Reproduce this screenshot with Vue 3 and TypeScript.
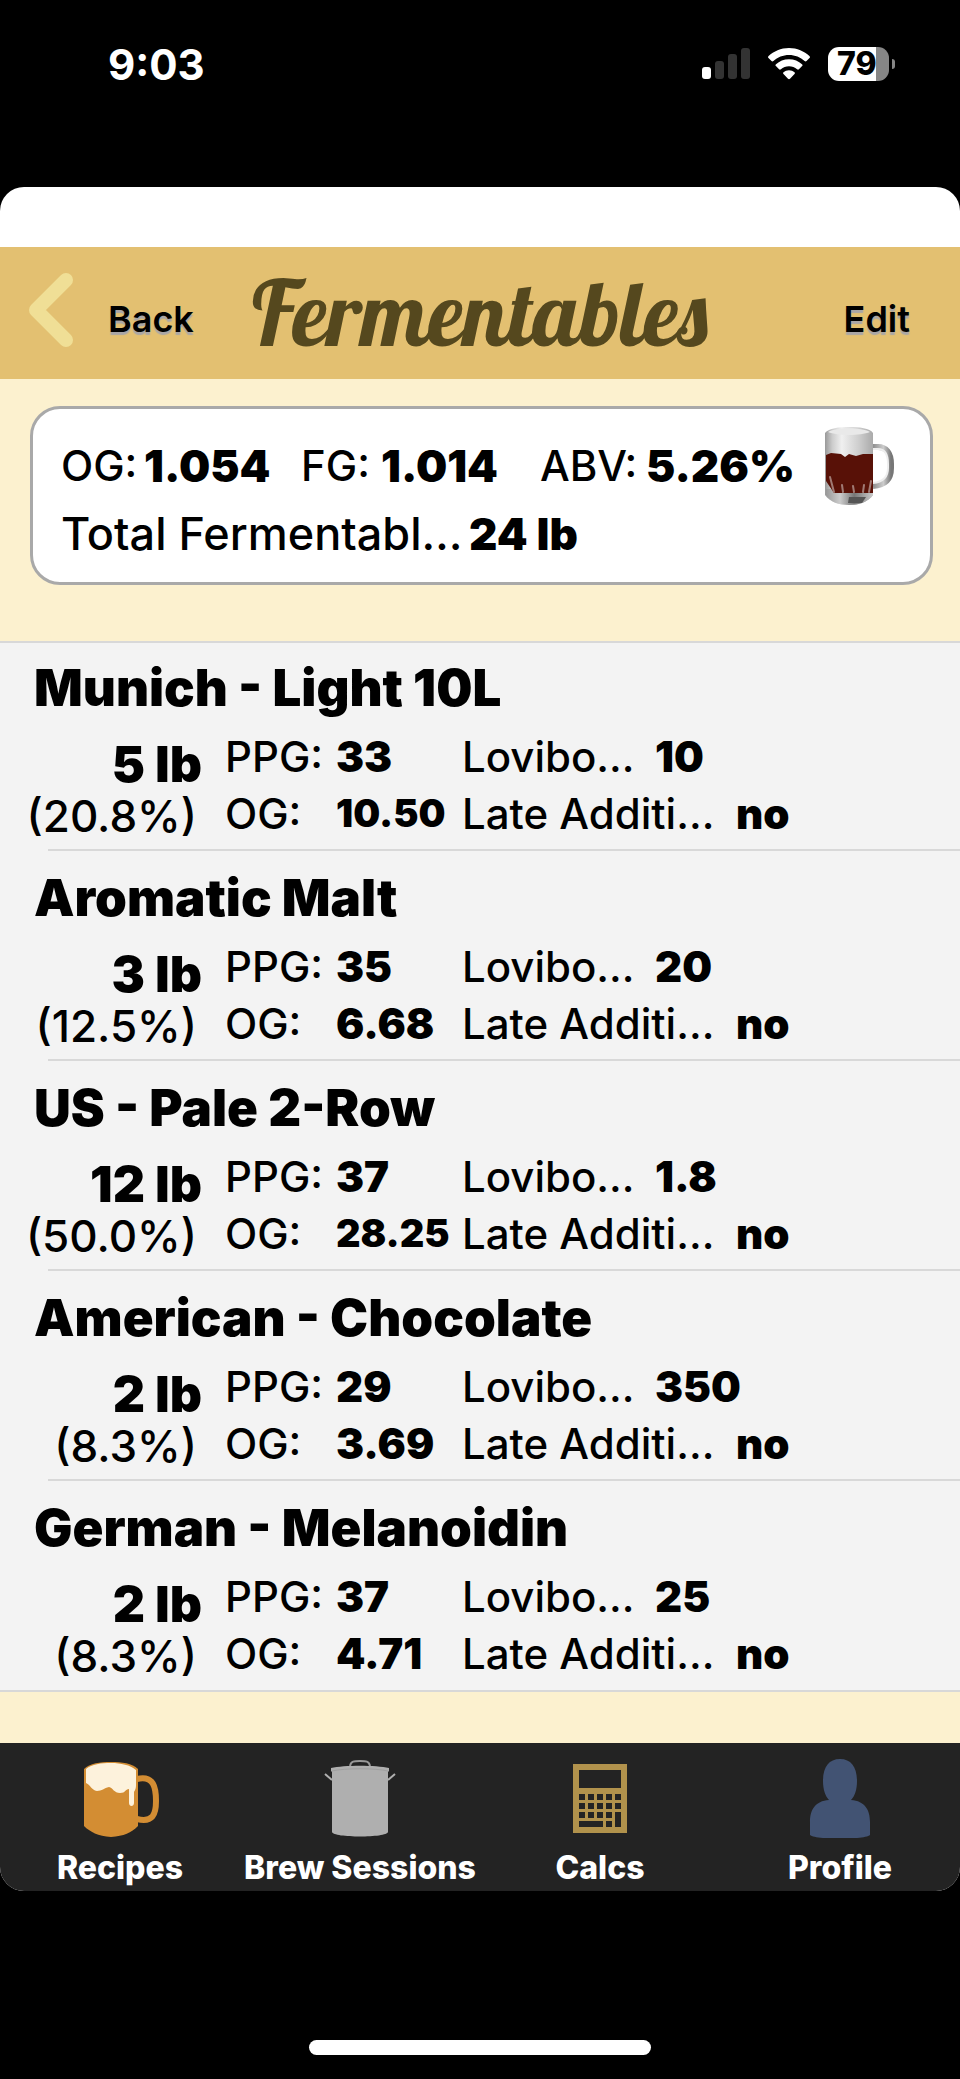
<script setup lang="ts">
interface Fermentable {
  name: string
  amount: string
  share: string
  ppg: string
  og: string
  lovibond: string
  late: string
}

const fermentables: Fermentable[] = [
  { name: 'Munich - Light 10L', amount: '5 lb', share: '(20.8%)', ppg: '33', og: '10.50', lovibond: '10', late: 'no' },
  { name: 'Aromatic Malt', amount: '3 lb', share: '(12.5%)', ppg: '35', og: '6.68', lovibond: '20', late: 'no' },
  { name: 'US - Pale 2-Row', amount: '12 lb', share: '(50.0%)', ppg: '37', og: '28.25', lovibond: '1.8', late: 'no' },
  { name: 'American - Chocolate', amount: '2 lb', share: '(8.3%)', ppg: '29', og: '3.69', lovibond: '350', late: 'no' },
  { name: 'German - Melanoidin', amount: '2 lb', share: '(8.3%)', ppg: '37', og: '4.71', lovibond: '25', late: 'no' },
]

const keyColumns = [6, 15, 24, 33, 42]
</script>

<template>
  <div class="screen">
    <div class="status">
      <span class="time">9:03</span>
      <div class="indicators">
        <svg viewBox="0 0 48 32" width="48" height="32">
          <rect x="0" y="19" width="9" height="12" rx="3" fill="#fff" />
          <rect x="13" y="13" width="9" height="18" rx="3" fill="#333" />
          <rect x="26" y="6" width="9" height="25" rx="3" fill="#333" />
          <rect x="39" y="0" width="9" height="31" rx="3" fill="#333" />
        </svg>
        <svg viewBox="0 0 42 32" width="42" height="32" fill="#fff">
          <path d="M21 0C12.900 0 5.700 3.200 .6 8.100c-.7.7-.7 1.400-.1 2l3 3c.6.6 1.300.5 1.900 0C9.500 9.300 15 7 21 7s11.500 2.300 15.600 6.100c.6.5 1.300.6 1.900 0l3-3c.6-.6.6-1.300-.1-2C36.300 3.200 29.100 0 21 0z" />
          <path d="M21 11.200c-5.100 0-9.600 1.900-13 5-.7.6-.7 1.300-.1 1.900l3.200 3.200c.6.6 1.200.5 1.800 0C15.100 19.400 17.900 18.300 21 18.300s5.900 1.100 8.100 3c.6.5 1.200.6 1.800 0l3.200-3.200c.6-.6.6-1.300-.1-1.900-3.400-3.100-7.900-5-13-5z" />
          <path d="M21 22.200c-2.100 0-4 .8-5.500 2-.6.5-.6 1.200 0 1.800l4.500 4.700c.6.6 1.400.6 2 0l4.500-4.700c.6-.6.6-1.300 0-1.800-1.500-1.200-3.400-2-5.500-2z" />
        </svg>
        <div class="battery"><span class="charge">79</span><i class="nub"></i></div>
      </div>
    </div>

    <main class="sheet">
      <header class="header">
        <button class="nav back" type="button">
          <svg viewBox="0 0 44 80" width="44" height="80" fill="none" stroke="#f0df96" stroke-width="14" stroke-linecap="round" stroke-linejoin="round">
            <path d="M37 7 7 37l30 30" />
          </svg>
          <span>Back</span>
        </button>
        <h1 class="heading">Fermentables</h1>
        <button class="nav" type="button"><span>Edit</span></button>
      </header>

      <section class="summary">
        <div class="card">
          <div class="stats">
            <dl class="line">
              <dt>OG:</dt><dd>1.054</dd>
              <dt>FG:</dt><dd>1.014</dd>
              <dt>ABV:</dt><dd>5.26%</dd>
            </dl>
            <svg viewBox="0 0 70 78" width="70" height="78">
              <defs>
                <linearGradient id="foam" x1="0" x2="1" y1="0" y2="0">
                  <stop offset="0" stop-color="#999" /><stop offset=".15" stop-color="#ccc" /><stop offset=".35" stop-color="#f0f0f0" /><stop offset=".7" stop-color="#cecece" /><stop offset="1" stop-color="#aaa" />
                </linearGradient>
                <linearGradient id="base" x1="0" x2="1" y1="0" y2="0">
                  <stop offset="0" stop-color="#999" /><stop offset=".3" stop-color="#ccc" /><stop offset=".6" stop-color="#777" /><stop offset="1" stop-color="#ccc" />
                </linearGradient>
                <linearGradient id="handle" x1="0" x2="1" y1="0" y2="0">
                  <stop offset="0" stop-color="#888" /><stop offset=".6" stop-color="#ccc" /><stop offset="1" stop-color="#777" />
                </linearGradient>
              </defs>
              <path d="M47 20h6c8 0 13 6 13 17v4c0 11-6 17-18 18" fill="none" stroke="url(#handle)" stroke-width="6" />
              <path d="M47 22h6c7 0 10 5 10 15v4c0 9-5 14-15 15" fill="none" stroke="#eee" stroke-width="2" />
              <path d="M0 6C4 1 14 0 24 0s21 1 24 6v62c-5 7-14 10-24 10S5 75 0 68z" fill="url(#foam)" />
              <path d="M1 62h47v6c-5 7-14 10-24 10S5 75 1 68z" fill="url(#base)" />
              <path d="M24 70h17l-4 6H23z" fill="#555" />
              <path d="M1 28l5-2 10 1 4 3 4-3 7 2 7-2 10 0v39H9L1 54z" fill="#581107" />
              <path d="M5 50l4 15M17 58l1 7M28 59l1 6M39 58l-1 7M46 54l-2 11" fill="none" stroke="#a07a74" stroke-width="2" stroke-linecap="round" />
              <path d="M3 5c10-5 32-5 42 0-10 4-32 4-42 0" fill="#e9e9e9" />
            </svg>
          </div>
          <dl class="line total">
            <dt>Total Fermentabl…</dt><dd>24 lb</dd>
          </dl>
        </div>
      </section>

      <ul class="list">
        <li v-for="item in fermentables" :key="item.name" class="row">
          <h2 class="name">{{ item.name }}</h2>
          <div class="details">
            <div class="quantity">
              <strong>{{ item.amount }}</strong>
              <span>{{ item.share }}</span>
            </div>
            <dl class="facts">
              <dt>PPG:</dt><dd>{{ item.ppg }}</dd>
              <dt>OG:</dt><dd :class="{ small: item.og.length > 4 }">{{ item.og }}</dd>
            </dl>
            <dl class="extras">
              <div><dt class="lovibond">Lovibo…</dt><dd>{{ item.lovibond }}</dd></div>
              <div><dt class="late">Late Additi…</dt><dd>{{ item.late }}</dd></div>
            </dl>
          </div>
        </li>
      </ul>

      <nav class="tabs">
        <a class="tab" href="#recipes">
          <svg viewBox="0 0 80 80" width="80" height="80">
            <path d="M57 21c17-4 19 9 19 22s-3 22-19 18" fill="none" stroke="#d38d33" stroke-width="6" />
            <path d="M4 11C10 5 20 4 31 4s21 1 27 7v57c-7 7-14 10-27 11C18 78 10 74 4 68z" fill="#d38d33" />
            <path d="M6 11C12 6 21 5 31 5s19 2 25 7v15c0 4-1 5-2 7v11c0 4-5 4-5 0V31c-4 0-3 4-9 4s-7-5-11-6c-5 1-7 4-12 4-6-1-6-6-11-8z" fill="#fdf2dc" />
          </svg>
          <span>Recipes</span>
        </a>
        <a class="tab" href="#sessions">
          <svg viewBox="0 0 80 80" width="80" height="80">
            <path d="M30 8c1-5 4-5 10-5s9 0 10 5" fill="none" stroke="#999" stroke-width="2" />
            <path d="M11 10c13-3 45-3 58 0v3l-1 1v60c-1 6-55 6-56 0V14l-1-1z" fill="#afafaf" />
            <path d="M5 16l7 6M75 16l-7 6" stroke="#afafaf" stroke-width="2" />
            <path d="M12 13c13-3 43-3 56 0" fill="none" stroke="#a0a0a0" />
          </svg>
          <span>Brew Sessions</span>
        </a>
        <a class="tab" href="#calcs">
          <svg viewBox="-13 -6 80 80" width="80" height="80">
            <rect width="54" height="69" fill="#b1924c" />
            <g fill="#232323">
              <rect x="6" y="6" width="42" height="18" />
              <template v-for="x in keyColumns" :key="x">
                <rect :x="x" y="30" width="6" height="6" />
                <rect :x="x" y="39" width="6" height="6" />
                <rect v-if="x < 42" :x="x" y="48" width="6" height="6" />
              </template>
              <rect x="6" y="57" width="24" height="6" />
              <rect x="33" y="57" width="6" height="6" />
              <rect x="42" y="48" width="6" height="15" />
            </g>
          </svg>
          <span>Calcs</span>
        </a>
        <a class="tab" href="#profile">
          <svg viewBox="0 0 80 80" width="80" height="80">
            <path d="M40 1c11 0 17 8 17 22 0 8-2 15-6 19 14 1 19 10 19 22v13c-6 5-54 5-60 0V64c0-12 5-21 19-22-4-4-6-11-6-19C23 9 29 1 40 1z" fill="#425373" />
          </svg>
          <span>Profile</span>
        </a>
      </nav>
    </main>
    <div class="home"></div>
  </div>
</template>

<style>
body {
  margin: 0;
  background: #000;
}
</style>

<style scoped>
.screen {
  padding-bottom: 24px;
  font-family: Inter, "Liberation Sans", sans-serif;
  color: #000;
  background: #000;
}
h1, h2, dl, dd, ul {
  margin: 0;
  padding: 0;
}
svg {
  display: block;
}
.status {
  display: flex;
  justify-content: space-between;
  align-items: center;
  height: 128px;
  padding: 0 65px 0 108px;
  margin-bottom: 59px;
  color: #fff;
}
.time {
  font-size: 42px;
  font-weight: 700;
}
.indicators {
  display: flex;
  align-items: center;
  gap: 18px;
}
.battery {
  display: flex;
  align-items: center;
  gap: 3px;
}
.charge {
  width: 61px;
  box-sizing: border-box;
  padding-left: 9px;
  border-radius: 11px;
  background: linear-gradient(90deg, #fff 48px, #868686 48px);
  color: #000;
  font-size: 32px;
  line-height: 34px;
  font-weight: 800;
}
.nub {
  width: 3px;
  height: 10px;
  border-radius: 0 4px 4px 0;
  background: #868686;
}
.sheet {
  padding-top: 60px;
  border-radius: 24px;
  background: #fff;
  overflow: hidden;
}
.header {
  display: flex;
  align-items: center;
  justify-content: space-between;
  height: 132px;
  padding: 0 50px 0 29px;
  background: #e3c071;
}
.nav {
  display: flex;
  align-items: center;
  gap: 35px;
  padding: 0;
  border: 0;
  background: none;
  color: #000;
  font: 600 36px/44px Inter, "Liberation Sans", sans-serif;
  text-shadow: 0 3px 1px #a9a6a6;
}
.nav span {
  padding-top: 12px;
}
.heading {
  flex: 1;
  padding-left: 58px;
  color: #55481e;
  font: 400 90px/102px Lobster, "Liberation Serif", serif;
}
.summary {
  padding: 27px 27px 56px 30px;
  background: #fcf1cf;
}
.card {
  padding: 18px 35px 17px 28px;
  border: 3px solid #a9a9a9;
  border-radius: 30px;
  background: #fff;
}
.stats {
  display: flex;
  align-items: center;
  justify-content: space-between;
  height: 78px;
}
.line {
  display: grid;
  grid-template-columns: 83px 157px 80px 159px 106px auto;
  font-size: 42px;
  line-height: 58px;
}
.line dd {
  font-size: 44px;
}
dt {
  font-weight: 500;
}
dd {
  font-weight: 900;
}
.total {
  grid-template-columns: 408px auto;
  padding-bottom: 2px;
  font-size: 45px;
}
.list {
  list-style: none;
  border-top: 2px solid #d8d8d8;
  background: #f3f3f3;
}
.row {
  padding: 15px 0 9px;
  background: linear-gradient(#d8d8d8, #d8d8d8) 48px 100% / 100% 2px no-repeat;
}
.row + .row {
  padding-top: 17px;
}
.row:last-child {
  padding-bottom: 8px;
  border-bottom: 2px solid #d8d8d8;
  background: none;
}
.name {
  padding-left: 34px;
  font-size: 51px;
  line-height: 60px;
  font-weight: 900;
}
.details {
  display: flex;
  padding-top: 10px;
  font-size: 42px;
  line-height: 57px;
}
.quantity {
  display: flex;
  flex-direction: column;
  align-items: flex-end;
  width: 202px;
  padding-top: 8px;
  box-sizing: border-box;
}
.quantity strong {
  font-size: 50px;
  font-weight: 900;
}
.quantity span {
  padding-right: 5px;
  font-size: 44px;
  font-weight: 500;
  line-height: 46px;
}
.facts {
  display: grid;
  grid-template-columns: 111px 126px;
  padding-left: 23px;
}
.facts .small {
  font-size: 38px;
}
.extras div {
  display: flex;
}
.lovibond {
  width: 193px;
}
.late {
  width: 274px;
}
.tabs {
  display: grid;
  grid-template-columns: repeat(4, 1fr);
  padding: 15px 0 0;
  border-top: 51px solid #fcf1cf;
  background: #232323;
}
.tab {
  display: flex;
  flex-direction: column;
  align-items: center;
  gap: 7px;
  color: #fff;
  font-size: 32px;
  line-height: 46px;
  font-weight: 800;
  text-decoration: none;
  white-space: nowrap;
}
.home {
  width: 342px;
  height: 15px;
  margin: 149px auto 0;
  border-radius: 8px;
  background: #fff;
}
</style>
